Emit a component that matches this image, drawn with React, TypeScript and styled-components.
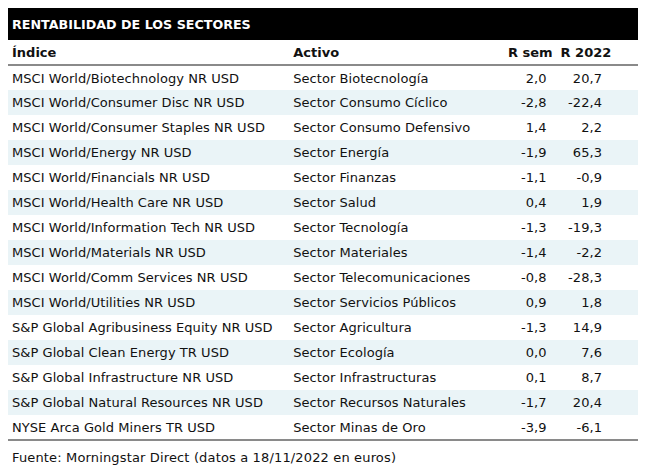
import React from "react";
import styled, { createGlobalStyle } from "styled-components";

type Row = {
  indice: string;
  activo: string;
  sem: string;
  year: string;
};

const ROWS: Row[] = [
  { indice: "MSCI World/Biotechnology NR USD", activo: "Sector Biotecnología", sem: "2,0", year: "20,7" },
  { indice: "MSCI World/Consumer Disc NR USD", activo: "Sector Consumo Cíclico", sem: "-2,8", year: "-22,4" },
  { indice: "MSCI World/Consumer Staples NR USD", activo: "Sector Consumo Defensivo", sem: "1,4", year: "2,2" },
  { indice: "MSCI World/Energy NR USD", activo: "Sector Energía", sem: "-1,9", year: "65,3" },
  { indice: "MSCI World/Financials NR USD", activo: "Sector Finanzas", sem: "-1,1", year: "-0,9" },
  { indice: "MSCI World/Health Care NR USD", activo: "Sector Salud", sem: "0,4", year: "1,9" },
  { indice: "MSCI World/Information Tech NR USD", activo: "Sector Tecnología", sem: "-1,3", year: "-19,3" },
  { indice: "MSCI World/Materials NR USD", activo: "Sector Materiales", sem: "-1,4", year: "-2,2" },
  { indice: "MSCI World/Comm Services NR USD", activo: "Sector Telecomunicaciones", sem: "-0,8", year: "-28,3" },
  { indice: "MSCI World/Utilities NR USD", activo: "Sector Servicios Públicos", sem: "0,9", year: "1,8" },
  { indice: "S&P Global Agribusiness Equity NR USD", activo: "Sector Agricultura", sem: "-1,3", year: "14,9" },
  { indice: "S&P Global Clean Energy TR USD", activo: "Sector Ecología", sem: "0,0", year: "7,6" },
  { indice: "S&P Global Infrastructure NR USD", activo: "Sector Infrastructuras", sem: "0,1", year: "8,7" },
  { indice: "S&P Global Natural Resources NR USD", activo: "Sector Recursos Naturales", sem: "-1,7", year: "20,4" },
  { indice: "NYSE Arca Gold Miners TR USD", activo: "Sector Minas de Oro", sem: "-3,9", year: "-6,1" },
];

const GlobalStyle = createGlobalStyle`
  body {
    margin: 8px;
    background: #ffffff;
    font-family: Verdana, "DejaVu Sans", sans-serif;
    color: #111111;
  }
`;

const Wrapper = styled.div`
  width: 630px;
  font-size: 13px;
`;

const TitleBar = styled.h2`
  margin: 0;
  height: 32px;
  padding: 0 4px;
  display: flex;
  align-items: center;
  background: #000000;
  color: #ffffff;
  font-size: 12.7px;
  font-weight: bold;
`;

const Table = styled.table`
  width: 100%;
  border-collapse: collapse;
  border-bottom: 2px solid #8a8a8a;
`;

const HeadCell = styled.th<{ $align?: "left" | "right"; $width: number }>`
  width: ${(p) => p.$width}px;
  height: 24px;
  padding: 0 ${(p) => (p.$align === "right" ? "4px" : "0")} 0 4px;
  text-align: ${(p) => p.$align ?? "left"};
  font-weight: bold;
  border-bottom: 2px solid #8a8a8a;
  white-space: nowrap;
`;

const BodyRow = styled.tr<{ $striped: boolean }>`
  height: 25px;
  background: ${(p) => (p.$striped ? "#eaf4f7" : "#ffffff")};
`;

const Cell = styled.td<{ $numeric?: boolean; $padRight?: number }>`
  padding: 0 ${(p) => (p.$numeric ? `${p.$padRight ?? 10}px` : "0")} 0 4px;
  text-align: ${(p) => (p.$numeric ? "right" : "left")};
  letter-spacing: 0.05px;
  white-space: nowrap;
`;

const Source = styled.p`
  margin: 9px 0 0 4px;
  font-size: 13px;
  letter-spacing: 0.15px;
`;

export default function App() {
  return (
    <>
      <GlobalStyle />
      <Wrapper>
        <TitleBar>RENTABILIDAD DE LOS SECTORES</TitleBar>
        <Table>
          <thead>
            <tr>
              <HeadCell $width={283}>Índice</HeadCell>
              <HeadCell $width={207}>Activo</HeadCell>
              <HeadCell $width={60} $align="right">R sem</HeadCell>
              <HeadCell $width={80} $align="left">R 2022</HeadCell>
            </tr>
          </thead>
          <tbody>
            {ROWS.map((row, i) => (
              <BodyRow key={row.indice} $striped={i % 2 === 1}>
                <Cell>{row.indice}</Cell>
                <Cell>{row.activo}</Cell>
                <Cell $numeric>{row.sem}</Cell>
                <Cell $numeric $padRight={36}>{row.year}</Cell>
              </BodyRow>
            ))}
          </tbody>
        </Table>
        <Source>Fuente: Morningstar Direct (datos a 18/11/2022 en euros)</Source>
      </Wrapper>
    </>
  );
}
